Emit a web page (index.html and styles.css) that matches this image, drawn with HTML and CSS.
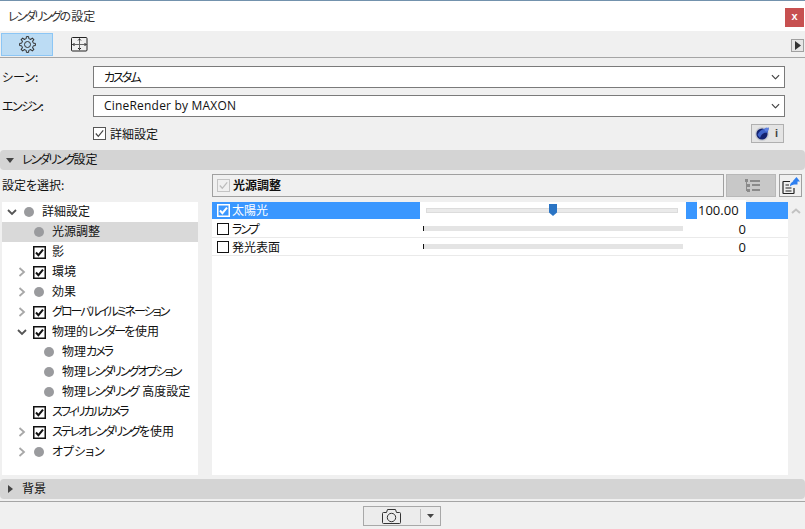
FILE: index.html
```html
<!DOCTYPE html>
<html lang="ja">
<head>
<meta charset="utf-8">
<title>レンダリングの設定</title>
<link rel="stylesheet" href="styles.css">
</head>
<body>
<svg class="defs" width="0" height="0" aria-hidden="true">
  <symbol id="check" viewBox="0 0 13 13"><rect x="0.75" y="0.75" width="11.5" height="11.5" fill="#fff" stroke="#111" stroke-width="1.5"/><path d="M3 6.5 L5.4 9.2 L10 3.6" fill="none" stroke="#111" stroke-width="2"/></symbol>
  <symbol id="chev-r" viewBox="0 0 10 10"><path d="M2.5 1 L7 5 L2.5 9" fill="none" stroke="#a8a8a8" stroke-width="1.8"/></symbol>
  <symbol id="chev-d" viewBox="0 0 10 10"><path d="M1 3 L5 7 L9 3" fill="none" stroke="#555" stroke-width="1.8"/></symbol>
  <symbol id="select-chev" viewBox="0 0 10 6"><path d="M1 1 L5 5 L9 1" fill="none" stroke="#444" stroke-width="1.3"/></symbol>
  <path id="gear-tooth" d="M-2.3 -5.54 L-1.25 -5.87 L-1.11 -7.92 L1.11 -7.92 L1.25 -5.87 L2.3 -5.54"/>
</svg>
<div class="window">
  <header class="titlebar">
    <span class="title"><span class="k">レンダリング</span>の設定</span>
    <span class="close">x</span>
  </header>

  <div class="toolbar">
    <span class="tool tool-active">
      <svg width="17" height="17" viewBox="0 0 17 17" fill="none" stroke="#333" stroke-width="1" stroke-linejoin="round">
        <g transform="translate(8.5 8.5)">
          <use href="#gear-tooth"/>
          <use href="#gear-tooth" transform="rotate(45)"/>
          <use href="#gear-tooth" transform="rotate(90)"/>
          <use href="#gear-tooth" transform="rotate(135)"/>
          <use href="#gear-tooth" transform="rotate(180)"/>
          <use href="#gear-tooth" transform="rotate(225)"/>
          <use href="#gear-tooth" transform="rotate(270)"/>
          <use href="#gear-tooth" transform="rotate(315)"/>
          <circle r="3"/>
        </g>
      </svg>
    </span>
    <span class="tool">
      <svg width="17" height="15" viewBox="0 0 17 15" fill="none" stroke="#222" stroke-width="1"><rect x="0.5" y="0.5" width="15.5" height="13.5" rx="1"/><path d="M8.5 1 V13.5 M1 7.5 H16" stroke="#666"/><path d="M7 3.5 L8.5 2 L10 3.5 M7 11 L8.5 12.5 L10 11 M3.5 6 L2 7.5 L3.5 9 M13.5 6 L15 7.5 L13.5 9"/></svg>
    </span>
    <span class="tool-more"><svg width="6" height="9" viewBox="0 0 6 9"><path d="M0 0 L6 4.5 L0 9 Z" fill="#333"/></svg></span>
  </div>

  <section class="form">
    <div class="form-row">
      <label class="form-label">シーン:</label>
      <div class="select"><span class="k">カスタム</span><svg class="select-icon" viewBox="0 0 10 6"><use href="#select-chev"/></svg></div>
    </div>
    <div class="form-row">
      <label class="form-label"><span class="k-soft">エンジン</span>:</label>
      <div class="select"><span class="latin">CineRender by MAXON</span><svg class="select-icon" viewBox="0 0 10 6"><use href="#select-chev"/></svg></div>
    </div>
    <div class="form-row form-options">
      <span class="form-label"></span>
      <span class="detail-check">
        <svg width="13" height="13" viewBox="0 0 13 13"><rect x="0.5" y="0.5" width="12" height="12" fill="#fff" stroke="#555"/><path d="M2.8 6.5 L5.3 9.3 L10.2 3.4" fill="none" stroke="#444" stroke-width="1.2"/></svg>
        詳細設定
      </span>
      <span class="engine-info">
        <svg width="15" height="15" viewBox="0 0 15 15"><circle cx="7" cy="8" r="7" fill="#c9ccd2"/><circle cx="7" cy="8" r="5.6" fill="#14226e"/><path d="M2.5 9 C4.5 4 9 2.5 14 1.5 L12.5 7 C9 6 6.5 8 5 12 Z" fill="#3f63c9"/><circle cx="11.5" cy="3.5" r="2" fill="#5d7fe0"/></svg>
        <span class="info-i">i</span>
      </span>
    </div>
  </section>

  <div class="section-head open">
    <svg width="8" height="5" viewBox="0 0 8 5"><path d="M0 0 H8 L4 5 Z" fill="#444"/></svg>
    <span class="t"><span class="k">レンダリング</span>設定</span>
  </div>

  <main class="panels">
    <div class="select-label"><span class="t">設定を選択:</span></div>
    <div class="detail-head">
      <div class="detail-title">
        <svg width="13" height="13" viewBox="0 0 13 13"><rect x="0.5" y="0.5" width="12" height="12" fill="#f0f0f0" stroke="#c4c4c4"/><path d="M2.8 6.5 L5.3 9.3 L10.2 3.4" fill="none" stroke="#bdbdbd" stroke-width="1.3"/></svg>
        <strong class="t">光源調整</strong>
      </div>
      <span class="list-btn">
        <svg width="17" height="13" viewBox="0 0 17 13" fill="#8a8a8a"><rect x="2" y="0" width="3" height="3"/><rect x="7" y="1" width="10" height="2"/><rect x="4" y="5" width="3" height="3"/><rect x="9" y="5" width="8" height="2"/><rect x="4" y="10" width="3" height="3"/><rect x="9" y="10" width="8" height="2"/><rect x="3" y="3" width="1" height="9"/></svg>
      </span>
      <span class="export-btn">
        <svg width="18" height="18" viewBox="0 0 18 18"><path d="M8 4.5 H1.5 Q1 4.5 1 5 V16 Q1 16.5 1.5 16.5 H11.5 Q12 16.5 12 16 V11" fill="none" stroke="#222" stroke-width="1.2"/><path d="M3.5 8 H7 M3.5 11 H9.5 M3.5 14 H9.5" stroke="#222" stroke-width="1.2"/><path d="M8 9.5 C8 6 10 4.5 12.5 4.5 V4.5 H10.5 L14.5 0 L18 4.5 H15.5 V7.5 H13.5 C11.5 7.5 9.5 8 8 9.5 Z" fill="#2e7ff0"/></svg>
      </span>
    </div>

    <ul class="tree">
      <li class="node lv1"><svg class="chev" viewBox="0 0 10 10"><use href="#chev-d"/></svg><i class="dot"></i><span class="t">詳細設定</span></li>
      <li class="node lv2 selected"><span class="chev"></span><i class="dot"></i><span class="t">光源調整</span></li>
      <li class="node lv2"><span class="chev"></span><svg class="mark" viewBox="0 0 13 13"><use href="#check"/></svg><span class="t">影</span></li>
      <li class="node lv2"><svg class="chev" viewBox="0 0 10 10"><use href="#chev-r"/></svg><svg class="mark" viewBox="0 0 13 13"><use href="#check"/></svg><span class="t">環境</span></li>
      <li class="node lv2"><svg class="chev" viewBox="0 0 10 10"><use href="#chev-r"/></svg><i class="dot"></i><span class="t">効果</span></li>
      <li class="node lv2"><svg class="chev" viewBox="0 0 10 10"><use href="#chev-r"/></svg><svg class="mark" viewBox="0 0 13 13"><use href="#check"/></svg><span class="t k">グローバルイルミネーション</span></li>
      <li class="node lv2"><svg class="chev" viewBox="0 0 10 10"><use href="#chev-d"/></svg><svg class="mark" viewBox="0 0 13 13"><use href="#check"/></svg><span class="t">物理的<span class="k">レンダー</span>を使用</span></li>
      <li class="node lv3"><span class="chev"></span><i class="dot"></i><span class="t">物理<span class="k">カメラ</span></span></li>
      <li class="node lv3"><span class="chev"></span><i class="dot"></i><span class="t">物理<span class="k">レンダリングオプション</span></span></li>
      <li class="node lv3"><span class="chev"></span><i class="dot"></i><span class="t wide-space">物理<span class="k">レンダリング</span> 高度設定</span></li>
      <li class="node lv2"><span class="chev"></span><svg class="mark" viewBox="0 0 13 13"><use href="#check"/></svg><span class="t k">スフィリカルカメラ</span></li>
      <li class="node lv2"><svg class="chev" viewBox="0 0 10 10"><use href="#chev-r"/></svg><svg class="mark" viewBox="0 0 13 13"><use href="#check"/></svg><span class="t"><span class="k">ステレオレンダリング</span>を使用</span></li>
      <li class="node lv2"><svg class="chev" viewBox="0 0 10 10"><use href="#chev-r"/></svg><i class="dot"></i><span class="t">オプション</span></li>
    </ul>

    <div class="lights">
      <div class="light-list">
        <div class="light on">
          <span class="light-name">
            <svg width="13" height="13" viewBox="0 0 13 13"><rect x="0.75" y="0.75" width="11.5" height="11.5" fill="none" stroke="#fff" stroke-width="1.5"/><path d="M3 6.5 L5.4 9.2 L10 3.6" fill="none" stroke="#fff" stroke-width="2"/></svg>
            <span class="t">太陽光</span>
          </span>
          <span class="slider slider-on"><i class="track"></i><i class="thumb"></i></span>
          <span class="value value-on"><b class="value-box">100.00</b></span>
          <span class="tail"></span>
        </div>
        <div class="light">
          <span class="light-name"><i class="box"></i><span class="k">ランプ</span></span>
          <span class="slider slider-off"><i class="track"></i></span>
          <span class="value">0</span>
          <span class="tail"></span>
        </div>
        <div class="light">
          <span class="light-name"><i class="box"></i>発光表面</span>
          <span class="slider slider-off"><i class="track"></i></span>
          <span class="value">0</span>
          <span class="tail"></span>
        </div>
      </div>
      <div class="scroll"><svg width="10" height="6" viewBox="0 0 10 6"><path d="M1 5 L5 1.5 L9 5" fill="none" stroke="#c2c2c2" stroke-width="2"/></svg></div>
    </div>
  </main>

  <div class="section-head closed">
    <svg width="5" height="8" viewBox="0 0 5 8"><path d="M0 0 L5 4 L0 8 Z" fill="#444"/></svg>
    <span class="t">背景</span>
  </div>

  <footer class="footer">
    <div class="render-btn">
      <span class="render-main">
        <svg width="19" height="15" viewBox="0 0 19 15" fill="none" stroke="#333" stroke-width="1" stroke-linejoin="round"><path d="M1.5 3.5 H4.5 L5.5 0.5 H13.5 L14.5 3.5 H17.5 Q18.5 3.5 18.5 4.5 V13.5 Q18.5 14.5 17.5 14.5 H1.5 Q0.5 14.5 0.5 13.5 V4.5 Q0.5 3.5 1.5 3.5 Z"/><circle cx="9.5" cy="8.5" r="4.2"/></svg>
      </span>
      <span class="render-sep"></span>
      <span class="render-arrow"><svg width="7" height="4" viewBox="0 0 7 4"><path d="M0 0 H7 L3.5 4 Z" fill="#444"/></svg></span>
    </div>
  </footer>
</div>
</body>
</html>
```
FILE: styles.css
```css
* { box-sizing: border-box; }
html, body { margin: 0; padding: 0; }
body {
  width: 805px;
  height: 529px;
  overflow: hidden;
  background: #f0f0f0;
  color: #111;
  font-family: "Noto Sans CJK JP", "Noto Sans", sans-serif;
  font-size: 12px;
  line-height: 18px;
  font-feature-settings: "palt";
}
.defs { position: absolute; }
svg { display: block; flex: none; }
.k { letter-spacing: -2px; }
.k-soft { letter-spacing: -1.5px; }
.t { white-space: nowrap; margin-bottom: 2px; }
.wide-space { word-spacing: 2px; }
.select-label .t { display: block; }

.window { display: flex; flex-direction: column; height: 529px; border-top: 1px solid #7392ad; }

.titlebar {
  height: 30px;
  background: #fff;
  display: flex;
  align-items: center;
  justify-content: space-between;
  padding: 0 1px 0 8px;
}
.title { color: #333; }
.close {
  width: 19px; height: 19px;
  margin-top: 3px;
  background: #c75050;
  color: #fff;
  font: bold 11px/17px "Liberation Sans", sans-serif;
  text-align: center;
}

.toolbar {
  height: 27px;
  border-bottom: 1px solid #a5a5a5;
  display: flex;
  align-items: center;
  padding: 2px 1px 1px;
  background: #f0f0f0;
}
.tool { width: 52px; height: 23px; display: flex; align-items: center; justify-content: center; }
.tool-active { background: #bcdcf4; border: 1px solid #8cc6f5; }
.tool-more {
  width: 13px; height: 13px;
  margin-left: auto;
  margin-top: 1px;
  border: 1px solid #a0a0a0;
  background: #e6e6e6;
  display: flex; align-items: center; justify-content: center;
}

.form { padding: 8px 20px 0 0; display: flex; flex-direction: column; gap: 7px; height: 92px; }
.form-row { display: flex; align-items: center; }
.form-label { width: 93px; padding-left: 2px; flex: none; }
.select {
  flex: 1;
  height: 22px;
  background: #fff;
  border: 1px solid #7a7a7a;
  display: flex; align-items: center; justify-content: space-between;
  padding: 0 4px 0 10px;
}
.select-icon { width: 9px; height: 6px; }
.latin { font-family: "Open Sans", sans-serif; letter-spacing: 0.2px; }
.form-options { height: 19px; }
.detail-check { display: flex; align-items: center; gap: 4px; }
.engine-info {
  margin-left: auto;
  margin-right: 1px;
  width: 33px; height: 19px;
  border: 1px solid #b0b0b0;
  background: #e4e4e4;
  display: flex; align-items: center; padding-left: 3px; gap: 5px;
}
.info-i { font: bold 11px/1 "Liberation Sans", sans-serif; color: #444; }

.section-head {
  background: #d4d4d4;
  display: flex; align-items: center;
  height: 20px;
  border-radius: 4px;
}
.section-head.open { gap: 8px; padding-left: 6px; }
.section-head.closed { gap: 9px; padding-left: 8px; margin-top: 4px; }

.panels {
  display: grid;
  grid-template-columns: 196px 591px;
  grid-template-rows: 23px 273px;
  column-gap: 14px;
  row-gap: 5px;
  padding: 4px 0 0 2px;
}
.select-label { align-self: center; }
.detail-head { display: flex; gap: 2px; }
.detail-title {
  width: 512px;
  border: 1px solid #a0a0a0;
  display: flex; align-items: center; gap: 3px;
  padding-left: 4px;
}
.list-btn {
  width: 50px;
  background: #c8c8c8;
  border: 1px solid #b8b8b8;
  display: flex; align-items: center; justify-content: center;
}
.export-btn {
  width: 23px;
  margin-left: 1px;
  border: 1px solid #a0a0a0;
  display: flex; align-items: center; justify-content: center;
}

.tree { list-style: none; margin: 0; padding: 0; background: #fff; }
.node { height: 20px; display: flex; align-items: center; white-space: nowrap; }
.node.lv1 { padding-left: 5px; }
.node.lv2 { padding-left: 15px; }
.node.lv3 { padding-left: 25px; }
.selected { background: #d9d9d9; }
.chev { width: 10px; height: 10px; margin-right: 6px; flex: none; }
.mark { width: 13px; height: 13px; margin-right: 6px; flex: none; }
.dot { width: 10px; height: 10px; margin: 0 8px 0 1px; border-radius: 50%; background: #9a9b9e; flex: none; }

.lights { display: flex; background: #fff; }
.light-list { width: 576px; }
.light { height: 18px; display: flex; align-items: center; border-bottom: 1px solid #eaeaea; }
.light.on { background: #3a97ff; border-bottom: 1px solid #fff; color: #fff; }
.light-name { width: 208px; height: 100%; padding-left: 5px; display: flex; align-items: center; gap: 3px; }
.light.on .light-name { gap: 2px; }
.box { width: 12px; height: 12px; border: 1.5px solid #111; background: #fff; }
.slider { width: 266px; height: 100%; position: relative; display: flex; align-items: center; background: #fff; }
.slider-on { padding: 0 8px 0 6px; }
.slider-on .track { flex: 1; height: 5px; background: #eaeaea; border: 1px solid #dcdcdc; }
.slider-off { padding-left: 3px; padding-right: 3px; }
.slider-off .track { flex: 1; height: 5px; background: #e4e4e4; border-left: 1px solid #111; }
.thumb {
  position: absolute; left: 129px; top: 2px;
  width: 8px; height: 12px;
  background: #2a74c4;
  clip-path: polygon(0 0, 100% 0, 100% 70%, 50% 100%, 0 70%);
}
.value { width: 60px; text-align: right; font-family: "Open Sans", sans-serif; font-size: 13px; }
.value-on { height: 100%; padding-left: 11px; color: #111; text-align: left; }
.value-box {
  display: block; width: 49px; height: 19px; margin-top: -2px;
  padding-left: 1px;
  background: #fff; font-weight: 400; line-height: 21px;
}
.tail { width: 42px; }
.scroll {
  width: 15px; background: #f0f0f0;
  display: flex; justify-content: center; padding-top: 6px;
}

.footer { margin-top: 2px; flex: 1; border-top: 1px solid #a5a5a5; display: flex; justify-content: center; padding: 4px 2px 0 0; }
.render-btn {
  width: 78px; height: 20px;
  border: 1px solid #a8a8a8;
  background: #ececec;
  display: flex; align-items: center;
}
.render-main { width: 56px; display: flex; justify-content: center; }
.render-sep { width: 1px; height: 14px; background: #bbb; }
.render-arrow { flex: 1; display: flex; justify-content: center; }
```
